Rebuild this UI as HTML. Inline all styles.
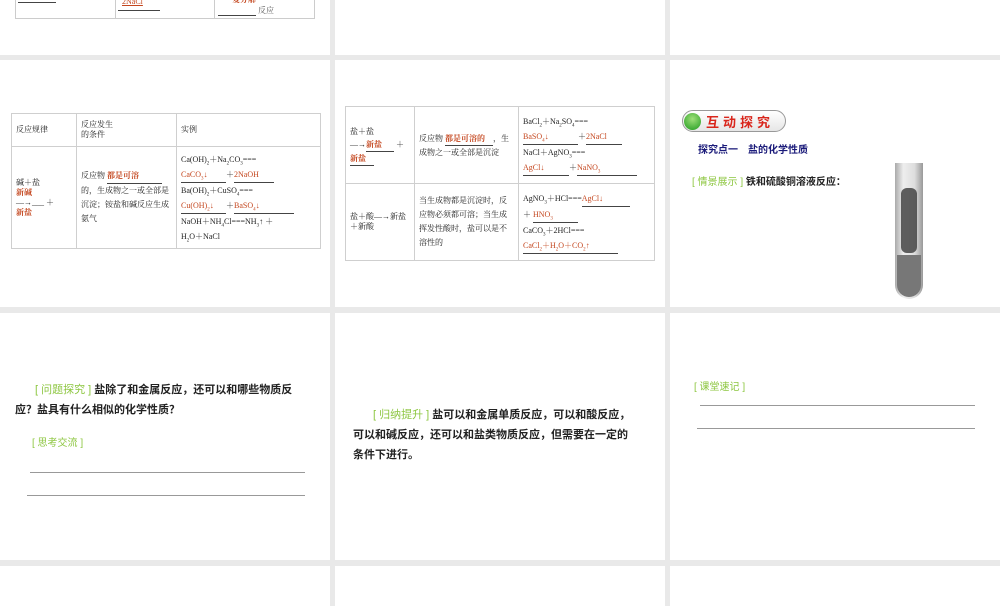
<!DOCTYPE html>
<html><head><meta charset="utf-8"><style>
*{margin:0;padding:0;box-sizing:border-box}
body{width:1000px;height:600px;background:#e9e9e9;position:relative;overflow:hidden;font-family:"Liberation Serif","Noto Serif CJK SC",serif;color:#222}
.s{position:absolute;background:#fff;overflow:hidden}
.a{position:absolute;white-space:nowrap}
.t{font-size:8px;line-height:10px}
.r{color:#c4461e;font-weight:bold}
.u{border-bottom:1px solid #444;display:inline-block}
.g{color:#8cc63f}
.b{font-family:"Liberation Sans","Noto Sans CJK SC",sans-serif;font-weight:bold;font-size:10px}
.hl{position:absolute;height:1px;background:#999}
table{position:absolute;border-collapse:collapse}
td{border:1px solid #cfcfcf;vertical-align:middle;font-size:8px;line-height:10px;padding:0 4px}
sub{font-size:5px;line-height:0}
</style></head><body>
<!-- row 0 -->
<div class="s" style="left:0;top:0;width:330px;height:55px">
 <div style="position:absolute;left:15px;top:-5px;width:300px;height:24px;border:1px solid #ccc;border-top:none"></div>
 <div style="position:absolute;left:115px;top:0;width:1px;height:18px;background:#ccc"></div>
 <div style="position:absolute;left:214px;top:0;width:1px;height:18px;background:#ccc"></div>
 <div class="hl" style="left:18px;top:2px;width:38px;background:#444"></div>
 <div class="a t r" style="left:122px;top:-3px;font-weight:normal;text-decoration:underline">2NaCl</div>
 <div class="hl" style="left:118px;top:10px;width:42px;background:#444"></div>
 <div class="a t r" style="left:232px;top:-5px">复分解</div>
 <div class="hl" style="left:218px;top:15px;width:38px;background:#444"></div>
 <div class="a t" style="left:258px;top:6px;color:#555">反应</div>
</div>
<div class="s" style="left:335px;top:0;width:330px;height:55px"></div>
<div class="s" style="left:670px;top:0;width:330px;height:55px"></div>
<!-- row 1 -->
<div class="s" style="left:0;top:60px;width:330px;height:247px">
 <table style="left:11px;top:53px;width:310px">
  <tr style="height:33px"><td style="width:65px">反应规律</td><td style="width:100px">反应发生<br>的条件</td><td>实例</td></tr>
  <tr style="height:102px"><td>碱＋盐<br><span class="r">新碱</span><br>―→___ ＋<br><span class="r">新盐</span></td>
  <td style="line-height:14px">反应物 <span class="r u" style="width:55px">都是可溶</span><br>的，生成物之一或全部是沉淀；铵盐和碱反应生成氨气</td>
  <td style="line-height:15px;padding-top:2px;padding-bottom:2px">Ca(OH)<sub>2</sub>＋Na<sub>2</sub>CO<sub>3</sub>===<br><span class="r u" style="width:45px;font-weight:normal">CaCO<sub>3</sub>↓</span>＋<span class="r u" style="width:40px;font-weight:normal">2NaOH</span><br>Ba(OH)<sub>2</sub>＋CuSO<sub>4</sub>===<br><span class="r u" style="width:45px;font-weight:normal">Cu(OH)<sub>2</sub>↓</span>＋<span class="r u" style="width:60px;font-weight:normal">BaSO<sub>4</sub>↓</span><br>NaOH＋NH<sub>4</sub>Cl===NH<sub>3</sub>↑ ＋<br>H<sub>2</sub>O＋NaCl</td></tr>
 </table>
</div>
<div class="s" style="left:335px;top:60px;width:330px;height:247px">
 <table style="left:10px;top:46px;width:310px">
  <tr style="height:77px"><td style="width:69px;line-height:13px">盐＋盐<br>―→<span class="r u" style="width:28px">新盐</span> ＋<br><span class="r u" style="width:24px">新盐</span></td>
  <td style="width:104px;line-height:13px">反应物 <span class="r u" style="width:48px">都是可溶的</span>，生成物之一或全部是沉淀</td>
  <td style="line-height:15px">BaCl<sub>2</sub>＋Na<sub>2</sub>SO<sub>4</sub>===<br><span class="r u" style="width:55px;font-weight:normal">BaSO<sub>4</sub>↓</span>＋<span class="r u" style="width:36px;font-weight:normal">2NaCl</span><br>NaCl＋AgNO<sub>3</sub>===<br><span class="r u" style="width:46px;font-weight:normal">AgCl↓</span>＋<span class="r u" style="width:60px;font-weight:normal">NaNO<sub>3</sub></span></td></tr>
  <tr style="height:77px"><td>盐＋酸―→新盐＋新酸</td><td style="line-height:14px">当生成物都是沉淀时，反应物必须都可溶；当生成挥发性酸时，盐可以是不溶性的</td>
  <td style="line-height:15px">AgNO<sub>3</sub>＋HCl===<span class="r u" style="width:48px;font-weight:normal">AgCl↓</span><br>＋ <span class="r u" style="width:45px;font-weight:normal">HNO<sub>3</sub></span><br>CaCO<sub>3</sub>＋2HCl===<br><span class="r u" style="width:95px;font-weight:normal">CaCl<sub>2</sub>＋H<sub>2</sub>O＋CO<sub>2</sub>↑</span></td></tr>
 </table>
</div>
<div class="s" style="left:670px;top:60px;width:330px;height:247px">
 <div style="position:absolute;left:12px;top:50px;width:104px;height:22px;border:1px solid #999;border-radius:11px;background:linear-gradient(#fff,#e6e6e6)"></div>
 <div style="position:absolute;left:14px;top:53px;width:17px;height:17px;border-radius:50%;background:radial-gradient(circle at 50% 35%,#9fe07a,#1e9a1e)"></div>
 <div class="a" style="left:36px;top:52px;font-family:'Liberation Sans','Noto Sans CJK SC',sans-serif;font-weight:bold;font-size:13px;color:#d9261c;letter-spacing:4px">互动探究</div>
 <div class="a b" style="left:28px;top:81px;color:#1b1b7a">探究点一　盐的化学性质</div>
 <div class="a b" style="left:22px;top:113px;font-weight:normal"><span class="g">[ 情景展示 ]</span> <b>铁和硫酸铜溶液反应：</b></div>
 <div style="position:absolute;left:225px;top:103px;width:28px;height:136px;border-radius:0 0 14px 14px;background:linear-gradient(90deg,#aaa,#eee 30%,#ddd 70%,#999)"></div>
 <div style="position:absolute;left:227px;top:195px;width:24px;height:42px;border-radius:0 0 12px 12px;background:#777"></div>
 <div style="position:absolute;left:231px;top:128px;width:16px;height:65px;background:#444;border-radius:6px;opacity:.85"></div>
</div>
<!-- row 2 -->
<div class="s" style="left:0;top:313px;width:330px;height:247px">
 <div class="a b" style="left:15px;top:67px;line-height:20px;font-weight:normal;white-space:normal;width:285px;text-indent:20px;font-size:11px"><span class="g">[ 问题探究 ]</span> <b>盐除了和金属反应，还可以和哪些物质反应？盐具有什么相似的化学性质？</b></div>
 <div class="a b g" style="left:32px;top:121px;font-weight:normal">[ 思考交流 ]</div>
 <div class="hl" style="left:30px;top:159px;width:275px"></div>
 <div class="hl" style="left:27px;top:182px;width:278px"></div>
</div>
<div class="s" style="left:335px;top:313px;width:330px;height:247px">
 <div class="a b" style="left:18px;top:92px;line-height:20px;white-space:normal;width:284px;text-indent:20px;font-weight:normal;font-size:11px"><span class="g">[ 归纳提升 ]</span> <b>盐可以和金属单质反应，可以和酸反应，可以和碱反应，还可以和盐类物质反应，但需要在一定的条件下进行。</b></div>
</div>
<div class="s" style="left:670px;top:313px;width:330px;height:247px">
 <div class="a b g" style="left:24px;top:65px;font-weight:normal">[ 课堂速记 ]</div>
 <div class="hl" style="left:30px;top:92px;width:275px"></div>
 <div class="hl" style="left:27px;top:115px;width:278px"></div>
</div>
<!-- row 3 -->
<div class="s" style="left:0;top:566px;width:330px;height:40px"></div>
<div class="s" style="left:335px;top:566px;width:330px;height:40px"></div>
<div class="s" style="left:670px;top:566px;width:330px;height:40px"></div>
</body></html>
